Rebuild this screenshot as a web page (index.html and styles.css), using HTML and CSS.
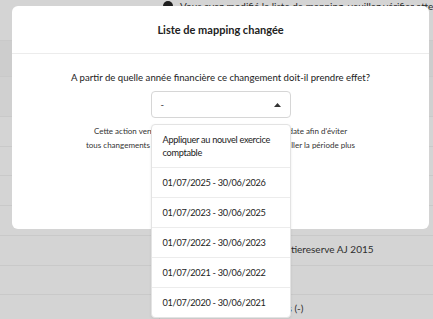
FILE: index.html
```html
<!DOCTYPE html>
<html lang="fr">
<head>
<meta charset="utf-8">
<title>Liste de mapping changée</title>
<link rel="stylesheet" href="styles.css">
</head>
<body>
<div class="page">
  <div class="notice">
    <span class="notice-icon"></span>
    <span class="notice-text">Vous avez modifié la liste de mapping, veuillez vérifier attentivement ces changements</span>
  </div>
  <div class="rows">
    <div class="row r1"></div>
    <div class="row r2"></div>
    <div class="row r3"></div>
    <div class="row r4"></div>
    <div class="row r5"></div>
    <div class="row r6"></div>
    <div class="row r7"><span class="row-text">132000 Beschikbare liquidatiereserve AJ 2015</span></div>
    <div class="row r8"></div>
    <div class="row r9"><div class="cell-left"></div><span class="row-text">140000 Overdragen verlies (-)</span></div>
  </div>
</div>

<div class="modal">
  <div class="modal-header">Liste de mapping changée</div>
  <div class="modal-body">
    <p class="question">A partir de quelle année financière ce changement doit-il prendre effet?</p>
    <div class="select-wrap">
      <div class="select">
        <span class="select-value">-</span>
        <svg class="caret" width="7" height="4" viewBox="0 0 7 4"><path d="M0 4 L3.5 0 L7 4 Z" fill="#333"/></svg>
      </div>
      <ul class="menu">
        <li>Appliquer au nouvel exercice comptable</li>
        <li>01/07/2025 - 30/06/2026</li>
        <li>01/07/2023 - 30/06/2025</li>
        <li>01/07/2022 - 30/06/2023</li>
        <li>01/07/2021 - 30/06/2022</li>
        <li>01/07/2020 - 30/06/2021</li>
      </ul>
    </div>
    <p class="help">Cette action verrouillera la liste de mapping avant cette date afin d'éviter<br>tous changements rétroactifs. Vous pouvez aussi déverrouiller la période plus<br>tard.</p>
  </div>
</div>
</body>
</html>
```

FILE: styles.css
```css
* { box-sizing: border-box; }
html, body { margin: 0; padding: 0; }
body {
  width: 433px;
  height: 319px;
  overflow: hidden;
  background: #d4d4d4;
  font-family: Lato, "Noto Sans", sans-serif;
  color: #222;
  position: relative;
}
.page { width: 433px; position: relative; z-index: 0; }
.notice {
  height: 41px;
  display: flex;
  align-items: flex-start;
  gap: 7px;
  padding-left: 163px;
  white-space: nowrap;
  overflow: hidden;
  font-size: 10px;
  line-height: 12px;
  color: #2a2a2a;
  border-bottom: 1px solid #c9c9c9;
}
.notice-icon {
  width: 10px;
  height: 10px;
  margin-top: 1px;
  border-radius: 50%;
  background: #1e1e1e;
  flex: none;
}
.rows { display: flex; flex-direction: column; }
.row {
  border-bottom: 1px solid #c9c9c9;
  display: flex;
  align-items: center;
  font-size: 10px;
  color: #2e2e2e;
}
.r1 { height: 36px; background: #cdcdcd; }
.r2 { height: 40px; background: #d0d0d0; }
.r3 { height: 30px; }
.r4 { height: 29px; }
.r5 { height: 30px; }
.r6 { height: 30px; }
.r7 { height: 30px; align-items: flex-start; padding-top: 7px; }
.r8 { height: 29px; }
.r9 { height: 30px; align-items: stretch; }
.cell-left { width: 160px; border-right: 1px solid #c9c9c9; flex: none; }
.row-text { padding-left: 169px; white-space: nowrap; }
.r9 .row-text { padding-left: 12px; padding-bottom: 3px; display: flex; align-items: center; }

.modal {
  position: absolute;
  z-index: 10;
  left: 12px;
  top: 6px;
  width: 417px;
  height: 223px;
  background: #fff;
  border-radius: 6px;
}
.modal-header {
  height: 48px;
  border-bottom: 1px solid #ececec;
  display: flex;
  align-items: center;
  justify-content: center;
  font-size: 11px;
  font-weight: 700;
  color: #222;
}
.modal-body {
  padding-top: 17px;
  display: flex;
  flex-direction: column;
  align-items: center;
}
.question {
  margin: 0;
  font-size: 9.6px;
  line-height: 14px;
  color: #222;
}
.select-wrap {
  position: relative;
  width: 140px;
  margin-top: 6px;
}
.select {
  height: 27px;
  border: 1px solid #d6d6d6;
  border-radius: 4px;
  display: flex;
  align-items: center;
  justify-content: space-between;
  padding: 0 9px 0 9px;
  font-size: 9.6px;
  color: #333;
}
.caret { display: block; }
.menu {
  position: absolute;
  left: 0;
  top: 33px;
  width: 140px;
  margin: 0;
  padding: 0;
  list-style: none;
  background: #fff;
  border: 1px solid #e3e3e3;
  border-radius: 4px;
  box-shadow: 0 1px 3px rgba(0,0,0,0.08);
  z-index: 2;
}
.menu li {
  padding: 8px 4px 8px 11px;
  font-size: 9.2px;
  letter-spacing: -0.3px;
  line-height: 13px;
  color: #222;
  border-bottom: 1px solid #ececec;
}
.menu li:last-child { border-bottom: none; }
.help {
  margin: 6px 0 0;
  text-align: center;
  font-size: 8px;
  line-height: 14px;
  color: #333;
}
```
